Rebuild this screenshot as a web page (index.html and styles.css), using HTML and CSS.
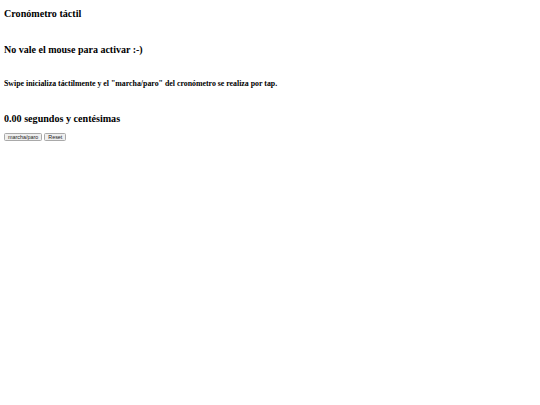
FILE: index.html
```html
<!DOCTYPE html>
<html lang="es">
<head>
<meta charset="utf-8">
<title>Cronómetro táctil</title>
<link rel="stylesheet" href="styles.css">
</head>
<body>
<h3 class="title">Cronómetro táctil</h3>
<h3 class="notice">No vale el mouse para activar :-)</h3>
<h5 class="hint">Swipe inicializa táctilmente y el "marcha/paro" del cronómetro se realiza por tap.</h5>
<h3 class="display">0.00 segundos y centésimas</h3>
<div class="controls">
  <button class="btn" type="button">marcha/paro</button>
  <button class="btn" type="button">Reset</button>
</div>
</body>
</html>
```
FILE: styles.css
```css
body {
  margin: 4px;
  font-family: "Liberation Serif", "Times New Roman", serif;
  font-size: 8px;
  color: #000;
  background: #fff;
}

h3,
h5 {
  font-weight: bold;
  line-height: 1.15;
  margin: 0;
}

.title {
  font-size: 10.1px;
  margin-top: 4px;
}

.notice {
  font-size: 10px;
  margin-top: 24.4px;
}

.hint {
  font-size: 7.85px;
  margin-top: 23.1px;
}

.display {
  font-size: 10.1px;
  margin-top: 25.2px;
}

.controls {
  display: flex;
  gap: 2px;
  margin-top: 8.4px;
}

.btn {
  font-family: "Liberation Sans", Arial, sans-serif;
  font-size: 5.4px;
  line-height: 6.6px;
  padding: 0 3px;
  border: 1px solid #a9a9a9;
  border-radius: 1.5px;
  background: #efefef;
  color: #222;
}
```
